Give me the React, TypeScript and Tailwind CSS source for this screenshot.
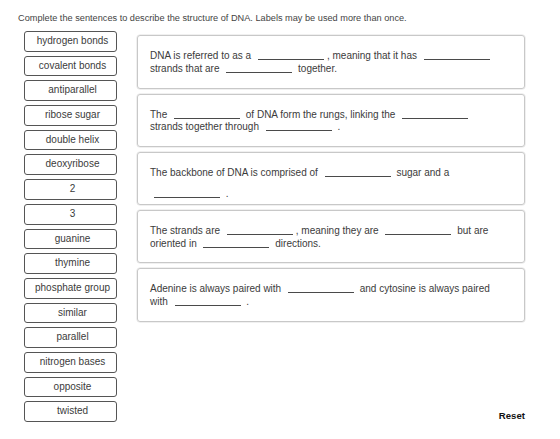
import React from "react";

type Part = string | { blank: true };

const B: Part = { blank: true };

const labels = [
  "hydrogen bonds",
  "covalent bonds",
  "antiparallel",
  "ribose sugar",
  "double helix",
  "deoxyribose",
  "2",
  "3",
  "guanine",
  "thymine",
  "phosphate group",
  "similar",
  "parallel",
  "nitrogen bases",
  "opposite",
  "twisted",
];

type Sentence = { lines: Part[][]; spacedSecond?: boolean };

const sentences: Sentence[] = [
  {
    lines: [
      ["DNA is referred to as a ", B, ", meaning that it has ", B],
      ["strands that are ", B, " together."],
    ],
  },
  {
    lines: [
      ["The ", B, " of DNA form the rungs, linking the ", B],
      ["strands together through ", B, " ."],
    ],
  },
  {
    lines: [
      ["The backbone of DNA is comprised of ", B, " sugar and a"],
      [B, " ."],
    ],
    spacedSecond: true,
  },
  {
    lines: [
      ["The strands are ", B, ", meaning they are ", B, " but are"],
      ["oriented in ", B, " directions."],
    ],
  },
  {
    lines: [
      ["Adenine is always paired with ", B, " and cytosine is always paired"],
      ["with ", B, " ."],
    ],
  },
];

function Blank() {
  return (
    <span className="inline-block w-[66px] h-[10px] ml-[4px] mr-[3px] border-b border-[#4a4a4a] align-[-1px]" />
  );
}

function SentenceCard({ s }: { s: Sentence }) {
  return (
    <div className="h-[53.3px] rounded-[3px] border border-[#c8c8c8] shadow-[0_0_0_0.5px_#e2e2e2] pl-[12px] pt-[14px] text-[10px] leading-[12.7px] text-[#3b3b3b]">
      {s.lines.map((line, i) => (
        <div
          key={i}
          className={
            "whitespace-pre" + (i === 1 && s.spacedSecond ? " mt-[8px]" : "")
          }
        >
          {line.map((p, j) =>
            typeof p === "string" ? <span key={j}>{p}</span> : <Blank key={j} />
          )}
        </div>
      ))}
    </div>
  );
}

export default function App() {
  return (
    <div className="w-[560px] h-[439px] bg-white font-['Liberation_Sans',Arial,sans-serif] text-[#3b3b3b]">
      <div className="pl-[18px] pt-[12px] text-[9.2px] leading-[12px] text-[#444]">
        Complete the sentences to describe the structure of DNA. Labels may be
        used more than once.
      </div>
      <div className="flex mt-[7px] pl-[24px]">
        <div className="flex flex-col gap-[4px] w-[93px]">
          {labels.map((l) => (
            <div
              key={l}
              className="h-[20.7px] rounded-[3px] border border-[#555] pl-[4px] text-center text-[10px] leading-[18.7px] text-[#3b3b3b] whitespace-nowrap"
            >
              {l}
            </div>
          ))}
        </div>
        <div className="ml-[20px] w-[388px] flex flex-col justify-between">
          <div className="mt-[4.3px] flex flex-col gap-[5px]">
            {sentences.map((s, i) => (
              <SentenceCard key={i} s={s} />
            ))}
          </div>
          <div className="self-end text-[9.6px] leading-[12px] font-bold text-[#111]">
            Reset
          </div>
        </div>
      </div>
    </div>
  );
}
